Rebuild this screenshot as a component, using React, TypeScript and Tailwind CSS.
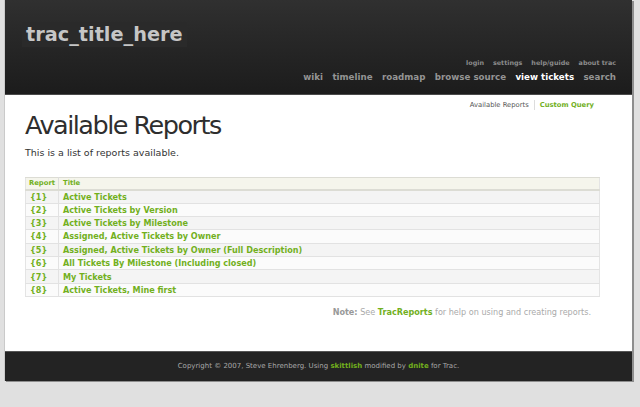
import React from "react";

const green = "text-[#72b01d]";

const mainNav = ["wiki", "timeline", "roadmap", "browse source", "view tickets", "search"];
const metaNav = ["login", "settings", "help/guide", "about trac"];

const reports = [
  { id: 1, title: "Active Tickets" },
  { id: 2, title: "Active Tickets by Version" },
  { id: 3, title: "Active Tickets by Milestone" },
  { id: 4, title: "Assigned, Active Tickets by Owner" },
  { id: 5, title: "Assigned, Active Tickets by Owner (Full Description)" },
  { id: 6, title: "All Tickets By Milestone (Including closed)" },
  { id: 7, title: "My Tickets" },
  { id: 8, title: "Active Tickets, Mine first" },
];

const App = () => {
  return (
    <div className="min-h-[407px] bg-[#e0e0e0] font-['DejaVu_Sans',sans-serif]">
      <div className="ml-[4px] w-[628px] border-l border-[#cacaca] bg-white shadow-[2px_1px_0_#8e8e8e]">
        {/* header */}
        <div className="h-[95px] border-b border-[#4a4a4a] bg-linear-to-b from-[#303030] to-[#1c1c1c] px-[16px] pt-[22px]">
          <div className="ml-[1px] inline-block bg-[#2a2a2a] px-[4px] py-[1px] text-[19.3px] leading-[23px] font-bold text-[#c6c6c6]">
            trac_title_here
          </div>
          <div className="mt-[10px] flex justify-end gap-[9px] text-[6.4px] leading-[10px] font-bold text-[#8c8c8c]">
            {metaNav.map((m) => (
              <span key={m}>{m}</span>
            ))}
          </div>
          <div className="mt-[2px] flex justify-end gap-[9.4px] text-[8.7px] leading-[14px] font-bold">
            {mainNav.map((n) => (
              <span key={n} className={n === "view tickets" ? "text-white" : "text-[#949494]"}>
                {n}
              </span>
            ))}
          </div>
        </div>

        {/* content */}
        <div className="h-[256px] pr-[32px] pl-[20px]">
          <div className="flex justify-end pt-[5px] pr-[6px] text-[6.8px] leading-[10px]">
            <span className="text-[#555]">Available Reports</span>
            <span className="mx-[5px] w-px bg-[#ddd]" />
            <span className={`font-bold ${green}`}>Custom Query</span>
          </div>
          <h1 className="mt-0 text-[25.5px] leading-[30px] tracking-[-1.5px] text-[#2e2e2e]">
            Available Reports
          </h1>
          <p className="mt-[6px] text-[9.5px] leading-[14px] text-[#333]">
            This is a list of reports available.
          </p>
          <table className="mt-[17px] w-full border border-[#e4e4e4] text-[8.1px] font-bold">
            <thead>
              <tr className="border-t border-b-2 border-[#dcdcd4] bg-[#f5f5ec] text-left text-[6.8px]">
                <th className={`h-[12px] w-[33px] border-r border-[#ddd] pl-[3px] ${green}`}>Report</th>
                <th className={`pl-[4px] ${green}`}>Title</th>
              </tr>
            </thead>
            <tbody>
              {reports.map((r, i) => (
                <tr
                  key={r.id}
                  className={`border-b border-[#e2e2e2] ${i % 2 === 0 ? "bg-[#f4f4f4]" : "bg-[#fbfbfb]"} ${green}`}
                >
                  <td className="h-[13.4px] border-r border-[#e2e2e2] pl-[4px] leading-[12px]">{`{${r.id}}`}</td>
                  <td className="pl-[4px] leading-[12px]">{r.title}</td>
                </tr>
              ))}
            </tbody>
          </table>
          <p className="mt-[9px] pr-[9px] text-right text-[8.1px] leading-[12px] text-[#aaa]">
            <span className="font-bold text-[#999]">Note:</span> See{" "}
            <span className={`font-bold ${green}`}>TracReports</span> for help on using and creating reports.
          </p>
        </div>

        {/* footer */}
        <div className="flex h-[30px] items-center justify-center border-t border-[#555] bg-[#232323] text-[7px] text-[#a8a8a8]">
          <span>
            Copyright © 2007, Steve Ehrenberg. Using <span className={`font-bold ${green}`}>skittlish</span> modified by{" "}
            <span className={`font-bold ${green}`}>dnite</span> for Trac.
          </span>
        </div>
      </div>
    </div>
  );
};

export default App;
